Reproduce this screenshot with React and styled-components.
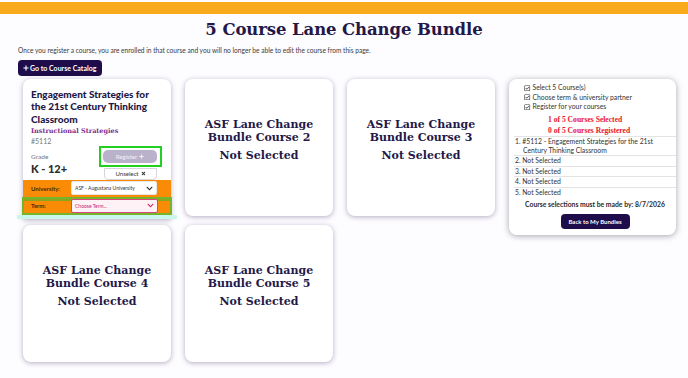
import styled, { createGlobalStyle } from "styled-components";
import { FaRegCheckSquare, FaPlus, FaTimes, FaChevronDown } from "react-icons/fa";

const GlobalStyle = createGlobalStyle`
  body {
    margin: 0;
    background: #fdfcff;
    font-family: Lato, "Noto Sans", sans-serif;
    color: #2b2b2b;
  }
`;

const navy = "#231848";

const Page = styled.div`
  width: 688px;
  height: 378px;
  overflow: hidden;
`;

const TopBar = styled.div`
  height: 12px;
  margin-top: 2px;
  background: #f9aa1c;
`;

const Title = styled.h1`
  margin: 5px 0 0;
  text-align: center;
  font-family: "DejaVu Serif", serif;
  font-size: 16.5px;
  line-height: 22px;
  font-weight: bold;
  letter-spacing: -0.1px;
  color: ${navy};
`;

const Intro = styled.p`
  margin: 5px 0 0 18px;
  font-size: 6.6px;
  line-height: 8px;
  color: #3a3a3a;
`;

const CatalogButton = styled.button`
  display: flex;
  align-items: center;
  gap: 1px;
  margin: 6px 0 0 18px;
  height: 16px;
  padding: 0 6px 0 5px;
  border: none;
  border-radius: 4px;
  background: #1e0c4b;
  color: #fff;
  font-family: inherit;
  font-size: 7px;
  font-weight: bold;
  svg { font-size: 6px; }
`;

const Grid = styled.div`
  display: grid;
  grid-template-columns: repeat(3, 148px) 167px;
  grid-template-rows: 140px 137px;
  column-gap: 14px;
  row-gap: 6px;
  margin-top: 3px;
  padding-left: 23px;
`;

const Card = styled.div`
  background: #fff;
  border-radius: 8px;
  box-shadow: 0 1px 5px rgba(70, 55, 100, 0.4);
  align-self: start;
  height: ${(p) => p.$h || 137}px;
`;

const EmptyCard = styled(Card)`
  display: flex;
  flex-direction: column;
  align-items: center;
  justify-content: center;
  padding-bottom: 16px;
  box-sizing: border-box;
  text-align: center;
  font-family: "DejaVu Serif", serif;
  font-weight: bold;
  font-size: 11px;
  line-height: 13px;
  color: ${navy};
`;

const Status = styled.div`
  margin-top: 5px;
`;

const SelectedCard = styled(Card)`
  display: flex;
  flex-direction: column;
  border-radius: 8px 8px 0 0;
`;

const CardBody = styled.div`
  padding: 9px 8px 0 8px;
  flex: 1;
`;

const CourseTitle = styled.div`
  font-size: 10px;
  line-height: 12.3px;
  font-weight: 900;
  color: ${navy};
`;

const Category = styled.div`
  margin-top: 1px;
  font-family: "DejaVu Serif", serif;
  font-size: 6.5px;
  line-height: 10px;
  font-weight: bold;
  color: #7a2e8e;
`;

const Number = styled.div`
  font-size: 7px;
  line-height: 10px;
  color: #777;
`;

const MetaRow = styled.div`
  display: flex;
  justify-content: space-between;
  align-items: flex-start;
  margin-top: 0;
`;

const Grade = styled.div`
  padding-top: 7px;
  font-size: 6.5px;
  line-height: 8px;
  color: #777;
  strong {
    display: block;
    margin-top: 2px;
    font-size: 11px;
    line-height: 12px;
    font-weight: 900;
    color: #2c2c2c;
  }
`;

const Actions = styled.div`
  display: flex;
  flex-direction: column;
  align-items: center;
  margin-right: 1px;
  gap: 1px;
`;

const Highlight = styled.div`
  padding: 2px 3px 2px 2px;
  border: 2px solid #22d022;
`;

const RegisterButton = styled.button`
  width: 54px;
  height: 13px;
  display: flex;
  align-items: center;
  justify-content: center;
  gap: 2px;
  border: none;
  border-radius: 5px;
  background: #bab1cb;
  color: #f4f0fa;
  font-family: inherit;
  font-size: 6px;
  svg { font-size: 5px; }
`;

const UnselectButton = styled.button`
  width: 53px;
  height: 12px;
  display: flex;
  align-items: center;
  justify-content: center;
  gap: 2px;
  border: 1px solid #d8d4de;
  border-radius: 0 0 4px 4px;
  background: #fff;
  color: #333;
  font-family: inherit;
  font-size: 6px;
  svg { font-size: 5px; }
`;

const FieldRow = styled.div`
  display: flex;
  align-items: center;
  height: 18px;
  padding: 0 14px 0 8px;
  background: #f98b06;
  ${(p) =>
    p.$highlight &&
    `
    height: 20px;
    margin: 0 -1px;
    padding-left: 9px;
    box-shadow: inset 0 0 0 2px #74b52c, inset 0 2px 0 2px #8aa51b;
  `}
`;

const Label = styled.span`
  width: 40px;
  font-size: 6px;
  font-weight: bold;
  color: #4a2a0a;
`;

const Select = styled.div`
  flex: 1;
  height: 12px;
  display: flex;
  align-items: center;
  justify-content: space-between;
  padding: 0 3px 0 3px;
  background: ${(p) => (p.$warn ? "#fff2f6" : "#fff")};
  border: 1px solid ${(p) => (p.$warn ? "#d8467b" : "#e6e6e6")};
  border-radius: 2px;
  font-size: 5px;
  color: ${(p) => (p.$warn ? "#c8245c" : "#333")};
  svg {
    font-size: 7px;
    color: ${(p) => (p.$warn ? "#c8245c" : "#222")};
  }
`;

const GlowStrip = styled.div`
  height: 4px;
  margin: 0 -6px;
  background: #cbf6ec;
`;

const Sidebar = styled.aside`
  grid-column: 4;
  grid-row: 1 / span 2;
  align-self: start;
  height: 156px;
  box-sizing: border-box;
  padding: 4px 0 6px 5px;
  background: #fff;
  border-radius: 8px;
  box-shadow: 0 1px 6px rgba(60, 60, 70, 0.45);
  font-size: 6.8px;
  color: #333;
`;

const Checklist = styled.ul`
  list-style: none;
  margin: 0;
  padding: 0 0 0 10px;
`;

const CheckItem = styled.li`
  display: flex;
  align-items: center;
  gap: 2px;
  line-height: 9.5px;
  svg { font-size: 6.5px; color: #333; }
`;

const Counter = styled.div`
  padding-left: 34px;
  margin-top: ${(p) => p.$mt || 0}px;
  font-family: "Liberation Serif", serif;
  font-weight: bold;
  font-size: 7.6px;
  line-height: 11.5px;
  color: #e8132e;
`;

const CourseList = styled.ol`
  list-style: none;
  margin: -1px 0 0;
  padding: 0;
`;

const CourseItem = styled.li`
  padding: 0 4px 0 9px;
  text-indent: -8px;
  border-top: 1px solid #e3e3e3;
  line-height: 9.4px;
`;

const Deadline = styled.div`
  margin-top: 2px;
  text-align: center;
  font-weight: bold;
  font-size: 6.8px;
  line-height: 10px;
  color: #2b2b2b;
`;

const BackButton = styled.button`
  display: block;
  margin: 5px auto 0;
  width: 69px;
  height: 15px;
  border: none;
  border-radius: 4px;
  background: #1e0c4b;
  color: #fff;
  font-family: inherit;
  font-weight: bold;
  font-size: 6px;
`;

const emptyCourses = [2, 3, 4, 5];

export default function App() {
  return (
    <Page>
      <GlobalStyle />
      <TopBar />
      <Title>5 Course Lane Change Bundle</Title>
      <Intro>
        Once you register a course, you are enrolled in that course and you will no longer be able to edit the course from this page.
      </Intro>
      <CatalogButton>
        <FaPlus />
        Go to Course Catalog
      </CatalogButton>

      <Grid>
        <SelectedCard $h={140}>
          <CardBody>
            <CourseTitle>Engagement Strategies for the 21st Century Thinking Classroom</CourseTitle>
            <Category>Instructional Strategies</Category>
            <Number>#5112</Number>
            <MetaRow>
              <Grade>
                Grade
                <strong>K - 12+</strong>
              </Grade>
              <Actions>
                <Highlight>
                  <RegisterButton>
                    Register <FaPlus />
                  </RegisterButton>
                </Highlight>
                <UnselectButton>
                  Unselect <FaTimes />
                </UnselectButton>
              </Actions>
            </MetaRow>
          </CardBody>
          <FieldRow>
            <Label>University:</Label>
            <Select>
              ASF - Augustana University
              <FaChevronDown />
            </Select>
          </FieldRow>
          <FieldRow $highlight>
            <Label>Term:</Label>
            <Select $warn>
              Choose Term...
              <FaChevronDown />
            </Select>
          </FieldRow>
          <GlowStrip />
        </SelectedCard>

        {emptyCourses.slice(0, 2).map((n) => (
          <EmptyCard key={n}>
            <div>ASF Lane Change</div>
            <div>Bundle Course {n}</div>
            <Status>Not Selected</Status>
          </EmptyCard>
        ))}

        <Sidebar>
          <Checklist>
            <CheckItem><FaRegCheckSquare />Select 5 Course(s)</CheckItem>
            <CheckItem><FaRegCheckSquare />Choose term &amp; university partner</CheckItem>
            <CheckItem><FaRegCheckSquare />Register for your courses</CheckItem>
          </Checklist>
          <Counter $mt={2}>1 of 5 Courses Selected</Counter>
          <Counter>0 of 5 Courses Registered</Counter>
          <CourseList>
            <CourseItem>1. #5112 - Engagement Strategies for the 21st Century Thinking Classroom</CourseItem>
            <CourseItem>2. Not Selected</CourseItem>
            <CourseItem>3. Not Selected</CourseItem>
            <CourseItem>4. Not Selected</CourseItem>
            <CourseItem>5. Not Selected</CourseItem>
          </CourseList>
          <Deadline>Course selections must be made by: 8/7/2026</Deadline>
          <BackButton>Back to My Bundles</BackButton>
        </Sidebar>

        {emptyCourses.slice(2).map((n) => (
          <EmptyCard key={n}>
            <div>ASF Lane Change</div>
            <div>Bundle Course {n}</div>
            <Status>Not Selected</Status>
          </EmptyCard>
        ))}
      </Grid>
    </Page>
  );
}
